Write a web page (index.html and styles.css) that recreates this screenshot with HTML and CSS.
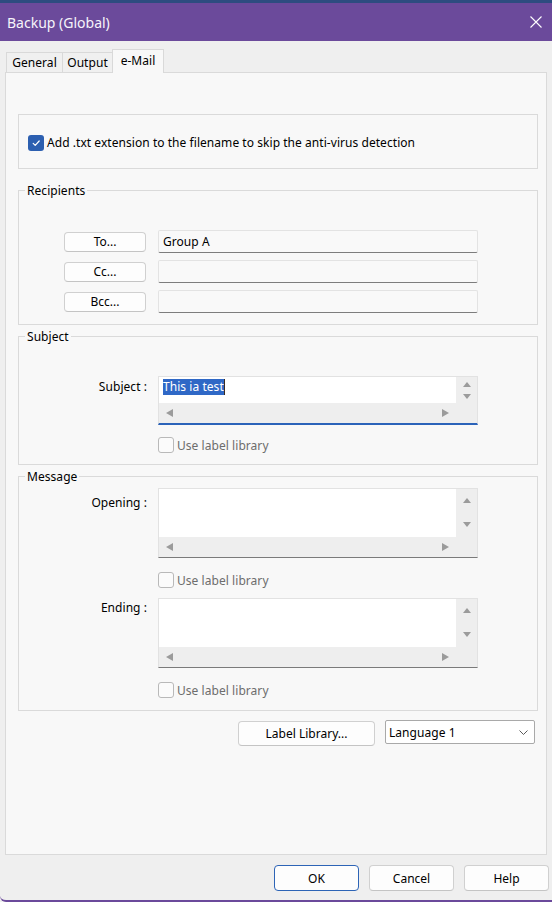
FILE: index.html
```html
<!DOCTYPE html>
<html lang="en">
<head>
<meta charset="utf-8">
<title>Backup (Global)</title>
<link rel="stylesheet" href="styles.css">
</head>
<body>
<div class="window">
  <div class="titlebar">
    <span class="title">Backup (Global)</span>
    <svg class="close" width="12" height="12" viewBox="0 0 12 12"><path d="M0.5 0.5 L11.5 11.5 M11.5 0.5 L0.5 11.5" stroke="#ffffff" stroke-width="1.1" fill="none"/></svg>
  </div>
  <div class="content">
    <div class="tabs">
      <div class="tab t-general">General</div>
      <div class="tab t-output">Output</div>
      <div class="tab t-mail active">e-Mail</div>
    </div>
    <div class="panel">
      <div class="box ext">
        <div class="check">
          <span class="cb on"><svg width="16" height="16" viewBox="0 0 16 16"><path d="M5.2 8.4 L7.2 10.4 L11.2 6" stroke="#ffffff" stroke-width="1.2" fill="none" stroke-linecap="round" stroke-linejoin="round"/></svg></span>
          <span>Add .txt extension to the filename to skip the anti-virus detection</span>
        </div>
      </div>

      <fieldset class="group recipients">
        <legend>Recipients</legend>
        <div class="rows">
          <div class="rrow"><button class="btn rbtn">To...</button><div class="field">Group A</div></div>
          <div class="rrow"><button class="btn rbtn">Cc...</button><div class="field"></div></div>
          <div class="rrow"><button class="btn rbtn">Bcc...</button><div class="field"></div></div>
        </div>
      </fieldset>

      <fieldset class="group subject">
        <legend>Subject</legend>
        <div class="frow">
          <div class="lbl lbl-subject">Subject :</div>
          <div class="ta single">
            <div class="text"><span class="sel">This ia test</span><span class="caret"></span></div>
            <div class="vs vs-single"><span class="up"></span><span class="down"></span></div>
            <div class="hs"><span class="left"></span><span class="right"></span></div>
            <div class="corner"></div>
          </div>
        </div>
        <div class="check dis c-subject"><span class="cb off"></span><span>Use label library</span></div>
      </fieldset>

      <fieldset class="group message">
        <legend>Message</legend>
        <div class="frow">
          <div class="lbl lbl-open">Opening :</div>
          <div class="ta multi">
            <div class="text"></div>
            <div class="vs vs-multi"><span class="up"></span><span class="down"></span></div>
            <div class="hs"><span class="left"></span><span class="right"></span></div>
            <div class="corner"></div>
          </div>
        </div>
        <div class="check dis c-open"><span class="cb off"></span><span>Use label library</span></div>
        <div class="frow r-ending">
          <div class="lbl lbl-end">Ending :</div>
          <div class="ta multi">
            <div class="text"></div>
            <div class="vs vs-multi"><span class="up"></span><span class="down"></span></div>
            <div class="hs"><span class="left"></span><span class="right"></span></div>
            <div class="corner"></div>
          </div>
        </div>
        <div class="check dis c-end"><span class="cb off"></span><span>Use label library</span></div>
      </fieldset>

      <div class="librow">
        <button class="btn libbtn">Label Library...</button>
        <div class="select"><span>Language 1</span><svg width="9" height="5" viewBox="0 0 9 5"><path d="M0.5 0.5 L4.5 4.5 L8.5 0.5" stroke="#5a5a5a" stroke-width="1" fill="none"/></svg></div>
      </div>
    </div>
    <div class="footer">
      <button class="btn dbtn default">OK</button>
      <button class="btn dbtn">Cancel</button>
      <button class="btn dbtn">Help</button>
    </div>
  </div>
</div>
</body>
</html>
```
FILE: styles.css
```css
html, body {
  margin: 0;
  padding: 0;
}
body {
  width: 552px;
  height: 902px;
  overflow: hidden;
  font-family: "Noto Sans", "Open Sans", sans-serif;
  font-size: 12px;
  letter-spacing: 0.05px;
  color: #000;
  background: #efefef;
}
.window {
  height: 902px;
  box-sizing: border-box;
  display: flex;
  flex-direction: column;
  border-top: 3px solid #2d4c80;
  border-bottom: 2px solid #6b4a9b;
  border-bottom-left-radius: 6px;
  background: #efefef;
}
.titlebar {
  height: 38px;
  flex: none;
  background: #6b4a9b;
  color: #f6f4fa;
  display: flex;
  align-items: center;
  justify-content: space-between;
  padding: 0 10px 0 7px;
  font-size: 14px;
  letter-spacing: 0;
}
.close { display: block; }
.content {
  flex: 1;
  display: flex;
  flex-direction: column;
}
.tabs {
  display: flex;
  align-items: flex-end;
  height: 23px;
  margin: 8px 0 0 6px;
  position: relative;
  z-index: 1;
}
.tab {
  height: 20px;
  box-sizing: border-box;
  border: 1px solid #d9d9d9;
  border-bottom: none;
  background: #f0f0f0;
  line-height: 19px;
  text-align: center;
  margin-left: -1px;
}
.t-general { width: 57px; margin-left: 0; }
.t-output { width: 51px; }
.t-mail { width: 52px; }
.tab.active {
  height: 24px;
  margin-bottom: -1px;
  background: #f8f8f8;
  line-height: 22px;
  position: relative;
}
.panel {
  width: 542px;
  height: 783px;
  margin-left: 5px;
  box-sizing: border-box;
  border: 1px solid #dadada;
  background: #f8f8f8;
  padding: 41px 8px 0 12px;
}
.box {
  width: 520px;
  box-sizing: border-box;
  border: 1px solid #dadada;
}
.ext {
  height: 55px;
  padding: 20px 0 0 9px;
}
.check {
  display: flex;
  align-items: center;
  gap: 3px;
  height: 16px;
  line-height: 16px;
}
.ext .check .cb { margin-top: -1px; }
.cb {
  width: 16px;
  height: 16px;
  box-sizing: border-box;
  border-radius: 3px;
  flex: none;
}
.cb svg { display: block; }
.cb.on { background: #2c5fb0; }
.cb.off { border: 1px solid #b9b9b9; background: #fbfbfb; }
.dis { color: #6d6d6d; padding-left: 139px; }
.dis span:last-child { padding-top: 1px; }
.group {
  margin: 13px 0 0;
  padding: 0;
  border: 1px solid #dadada;
  width: 520px;
  box-sizing: border-box;
  min-width: 0;
}
.group legend {
  margin-left: 6px;
  padding: 1px 2px 0;
  line-height: 16px;
  height: 16px;
  box-sizing: border-box;
}
.subject, .message { margin-top: 3px; }
.rows {
  display: flex;
  flex-direction: column;
  gap: 7px;
  padding: 32px 0 11px 45px;
}
.rrow {
  display: flex;
  align-items: center;
  height: 23px;
}
.btn {
  font: inherit;
  color: #000;
  background: #fdfdfd;
  border: 1px solid #d0d0d0;
  border-bottom-color: #c4c4c4;
  border-radius: 4px;
  padding: 0;
  box-sizing: border-box;
}
.rbtn {
  width: 82px;
  height: 20px;
  line-height: 17px;
}
.field {
  width: 320px;
  height: 23px;
  margin-left: 12px;
  box-sizing: border-box;
  border: 1px solid #e3e3e3;
  border-bottom-color: #7d7d7d;
  border-radius: 2px;
  background: #f9f9f9;
  padding-left: 4px;
  line-height: 21px;
}
.subject .frow { margin-top: 32px; }
.message .frow { margin-top: 4px; }
.message .r-ending { margin-top: 10px; }
.frow { display: flex; }
.lbl {
  width: 128px;
  text-align: right;
  margin-right: 11px;
  line-height: 16px;
}
.lbl-subject { padding-top: 3px; }
.lbl-open { padding-top: 7px; }
.lbl-end { padding-top: 2px; }
.ta {
  width: 320px;
  box-sizing: border-box;
  border: 1px solid #e2e2e2;
  border-bottom-color: #7a7a7a;
  background: #eeeeee;
  display: grid;
  grid-template-columns: 1fr 21px;
}
.ta.single {
  grid-template-rows: 26px 20px;
  border-bottom: 2px solid #2b63b9;
}
.ta.multi {
  grid-template-rows: 48px 20px;
}
.ta .text {
  background: #ffffff;
  padding: 2px 0 0 4px;
  line-height: 16px;
  display: flex;
  align-items: flex-start;
}
.sel {
  background: #2f68c6;
  color: #ffffff;
}
.caret {
  width: 1px;
  height: 16px;
  background: #3a2a20;
}
.vs {
  display: flex;
  flex-direction: column;
  align-items: center;
}
.vs-single { padding-top: 5px; gap: 7px; }
.vs-multi { padding-top: 9px; gap: 19px; }
.up {
  width: 0; height: 0;
  border-left: 4px solid transparent;
  border-right: 4px solid transparent;
  border-bottom: 5px solid #9b9b9b;
}
.down {
  width: 0; height: 0;
  border-left: 4px solid transparent;
  border-right: 4px solid transparent;
  border-top: 5px solid #9b9b9b;
}
.hs {
  display: flex;
  justify-content: space-between;
  align-items: center;
  padding: 0 7px;
}
.left {
  width: 0; height: 0;
  border-top: 4px solid transparent;
  border-bottom: 4px solid transparent;
  border-right: 7px solid #9b9b9b;
}
.right {
  width: 0; height: 0;
  border-top: 4px solid transparent;
  border-bottom: 4px solid transparent;
  border-left: 7px solid #9b9b9b;
}
.c-subject { margin-top: 12px; margin-bottom: 11px; }
.c-open { margin-top: 14px; }
.c-end { margin-top: 14px; margin-bottom: 12px; }
.librow {
  display: flex;
  align-items: flex-start;
  margin-top: 9px;
  padding-left: 220px;
  gap: 10px;
}
.libbtn {
  width: 137px;
  height: 25px;
  margin-top: 1px;
}
.select {
  width: 150px;
  height: 24px;
  box-sizing: border-box;
  border: 1px solid #a9a9a9;
  border-radius: 2px;
  background: #ffffff;
  display: flex;
  align-items: center;
  justify-content: space-between;
  padding: 0 6px 0 3px;
}
.select svg { display: block; }
.footer {
  display: flex;
  justify-content: flex-end;
  gap: 10px;
  padding: 10px 3px 0 0;
}
.dbtn {
  width: 85px;
  height: 26px;
}
.dbtn.default {
  border-color: #2d64b6;
}
```
